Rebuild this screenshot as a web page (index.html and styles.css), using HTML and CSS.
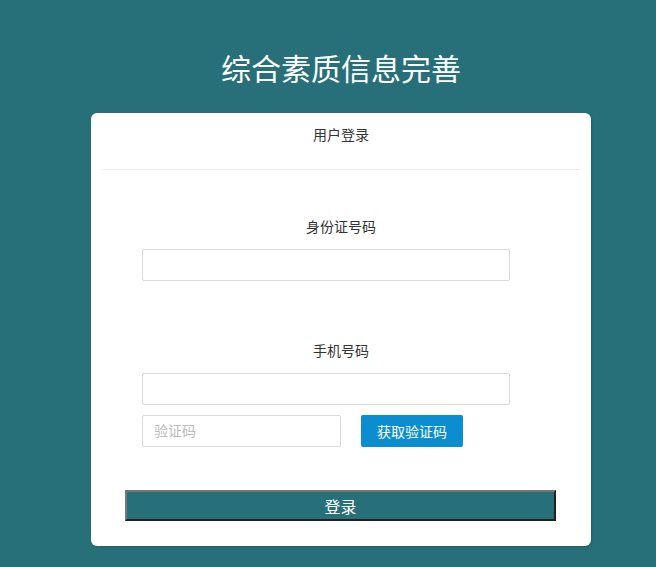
FILE: index.html
```html
<!DOCTYPE html>
<html lang="zh">
<head>
  <meta charset="UTF-8" />
  <meta name="viewport" content="width=device-width, initial-scale=1.0"/>
  <title>综合素质信息完善</title>
  <link rel="stylesheet" href="styles.css">
</head>
<body>

  <div class="page">
    <h1>综合素质信息完善</h1>

    <div class="card">
      <div class="card-header">用户登录</div>

      <form class="login-form" onsubmit="return false">
        <label class="field-label" for="idcard">身份证号码</label>
        <input type="text" id="idcard" class="field-input">

        <label class="field-label label-phone" for="phone">手机号码</label>
        <input type="text" id="phone" class="field-input">

        <div class="code-row">
          <input type="text" id="code" class="code-input" placeholder="验证码">
          <button type="button" class="code-btn">获取验证码</button>
        </div>

        <button type="submit" class="login-btn">登录</button>
      </form>
    </div>
  </div>

</body>
</html>
```

FILE: styles.css
```css
body {
  margin: 0;
  background-color: #277079;
  font-family: 'Liberation Sans', 'Noto Sans CJK SC', sans-serif;
  color: #333;
}

.page {
  padding: 50px 0 20px 26px;
}

h1 {
  margin: 0 0 23px;
  text-align: center;
  font-size: 30px;
  line-height: 40px;
  font-weight: normal;
  color: #fff;
}

.card {
  width: 500px;
  margin: 0 auto;
  padding: 0 11px 25px;
  box-sizing: border-box;
  background: #fff;
  border-radius: 6px;
  box-shadow: 1px 1px 2px rgba(0, 0, 0, 0.15);
}

.card-header {
  line-height: 44px;
  padding-bottom: 12px;
  border-bottom: 1px solid #eee;
  text-align: center;
  font-size: 14px;
}

.login-form {
  display: flex;
  flex-direction: column;
  padding-top: 47px;
}

.field-label {
  text-align: center;
  font-size: 14px;
  line-height: 20px;
  margin-bottom: 12px;
}

.label-phone {
  margin-top: 60px;
}

.field-input,
.code-input {
  height: 32px;
  padding: 0 11px;
  border: 1px solid #d9d9d9;
  border-radius: 2px;
  box-sizing: border-box;
  font-size: 14px;
  outline: none;
}

.field-input {
  width: 368px;
  margin-left: 40px;
}

.code-row {
  display: flex;
  gap: 20px;
  margin: 10px 0 0 40px;
}

.code-input {
  width: 199px;
  font-family: inherit;
}

.code-input::placeholder {
  color: #bbb;
}

.code-btn {
  width: 102px;
  height: 32px;
  border: none;
  border-radius: 2px;
  background: #0a8ed0;
  color: #fff;
  font-family: inherit;
  font-size: 14px;
  cursor: pointer;
}

.login-btn {
  width: 431px;
  height: 31px;
  margin: 43px 0 0 23px;
  padding: 0;
  border: 2px outset #767676;
  background: #277079;
  color: #fff;
  font-family: inherit;
  font-size: 16px;
  cursor: pointer;
}
```
